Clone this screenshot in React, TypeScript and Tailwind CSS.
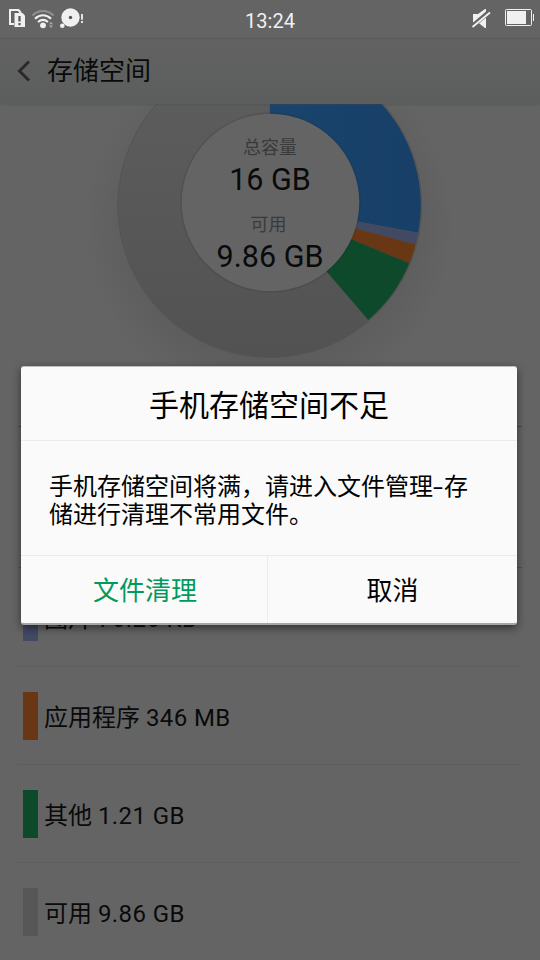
const sans = "font-['Roboto','Noto_Sans_CJK_SC',sans-serif]";

const CX = 269.8;
const CY = 101.5;
const R = 151;

const slices = [
    { from: -90, to: 10.4, color: "url(#blue)" },
    { from: 10.4, to: 15, color: "#414963" },
    { from: 15, to: 22.5, color: "#693714" },
    { from: 22.5, to: 49.3, color: "#0d492a" },
];

const slicePath = (from: number, to: number) => {
    const point = (deg: number) => {
        const rad = (deg * Math.PI) / 180;
        return `${CX + R * Math.cos(rad)} ${CY + R * Math.sin(rad)}`;
    };
    return `M${CX} ${CY}L${point(from)}A${R} ${R} 0 0 1 ${point(to)}Z`;
};

const rows = [
    { name: "图片", size: "76.26 KB", color: "bg-[#414963]" },
    { name: "应用程序", size: "346 MB", color: "bg-[#693714]" },
    { name: "其他", size: "1.21 GB", color: "bg-[#0d4a2b]" },
    { name: "可用", size: "9.86 GB", color: "bg-[#575757]" },
];

const StatusBar = () => (
    <div className="grid h-[38px] shrink-0 grid-cols-3 items-start text-[#f0f0f0]">
        <svg width="90" height="38" viewBox="0 0 90 38" fill="none">
            {/* SIM cards */}
            <path d="M14 24H10V10h8.500l2.500 3" stroke="currentColor" strokeWidth="2" />
            <path d="M14.500 13h8l2.500 2.500V27H14.500z" fill="currentColor" />
            <path d="M19.500 16v5.500M19.500 23v2.200" stroke="#555" strokeWidth="2.200" />
            {/* wifi */}
            <path d="M32.500 15.500c6-6 15-6 21 0" stroke="#929292" strokeWidth="2" />
            <path d="M35 18.700c5-4.500 11-4.500 16 0M38 22c3-2.500 7-2.500 10 0" stroke="currentColor" strokeWidth="2.200" />
            <circle cx="43" cy="25.300" r="2.900" fill="currentColor" />
            <path d="M49 24.300l2-2.500 2 2.500zM49 25.500l2 2.500 2-2.500z" fill="#aaa" />
            {/* disc */}
            <circle cx="70.500" cy="17.500" r="9.200" fill="currentColor" />
            <circle cx="70.500" cy="17.500" r="1.700" fill="#555" />
            <circle cx="62.300" cy="25.700" r="2.300" fill="currentColor" />
            <path d="M82 14v5.800M82 21v2" stroke="currentColor" strokeWidth="1.800" />
        </svg>
        <span className="pt-[9px] text-center text-[20px] leading-6">13:24</span>
        <svg className="justify-self-end" width="80" height="38" viewBox="0 0 80 38" fill="none">
            <path d="M13 14h5l7-5h1v19h-1l-7-5.500h-5z" fill="currentColor" />
            <path d="M12 26.500L29 12" stroke="#636363" strokeWidth="4.500" />
            <path d="M12.500 27L30 12.500" stroke="currentColor" strokeWidth="2" />
            <rect x="45.500" y="9.500" width="26" height="16" rx="1" stroke="currentColor" />
            <path d="M47 11h19v13H47z" fill="currentColor" />
            <path d="M73.500 14v7" stroke="currentColor" />
        </svg>
    </div>
);

const Header = () => (
    <header className="z-10 flex h-[66px] shrink-0 items-center border-t border-[#5a5a5a] bg-linear-to-b from-[#626262] to-[#5c5e5d] pb-px shadow-[0_1px_2px_#4a4a4a66]">
        <svg className="ml-4" width="15" height="22" viewBox="0 0 15 22" fill="none">
            <path d="M13 1.500L3.500 11l9.500 9.500" stroke="#2a2a2a" strokeWidth="3" />
        </svg>
        <h1 className="ml-4 text-[26px] leading-8 text-[#0a0a0a]">存储空间</h1>
    </header>
);

const StorageChart = () => (
    <div className="relative h-[322px] shrink-0">
        <svg width="540" height="322" viewBox="0 0 540 322">
            <defs>
                <linearGradient id="ring" x1="0" y1="0" x2="0" y2="1">
                    <stop offset="0" stopColor="#5e5e5e" />
                    <stop offset="1" stopColor="#525252" />
                </linearGradient>
                <linearGradient id="blue" x1="0" y1="0" x2="1" y2="0">
                    <stop offset="0" stopColor="#1a446c" />
                    <stop offset="1" stopColor="#173f68" />
                </linearGradient>
                <radialGradient id="halo">
                    <stop offset="0.700" stopColor="#5c5c5c" />
                    <stop offset="1" stopColor="#646464" />
                </radialGradient>
                <radialGradient id="hole">
                    <stop offset="0.960" stopColor="#000" stopOpacity="0.200" />
                    <stop offset="1" stopColor="#000" stopOpacity="0" />
                </radialGradient>
            </defs>
            <circle cx={CX} cy="120" r="185" fill="url(#halo)" />
            <circle cx={CX} cy={CY} r="152" fill="url(#ring)" stroke="#545454" />
            {slices.map((s) => (
                <path key={s.from} d={slicePath(s.from, s.to)} fill={s.color} />
            ))}
            <circle cx="270.500" cy="98.500" r="91" fill="url(#hole)" />
            <circle cx="270.500" cy="98.500" r="88.800" fill="#646464" />
        </svg>
        <div className="absolute inset-x-0 top-[31px] flex flex-col items-center text-[#0a0a0a]">
            <span className="text-[18px] leading-[26px] text-[#3a3a3a]">总容量</span>
            <span className="text-[30.5px] leading-[38px]">16 GB</span>
            <span className="mt-[13px] pr-[3px] text-[18px] leading-[26px] text-[#3a3a3a]">可用</span>
            <span className="text-[30.5px] leading-[38px]">9.86 GB</span>
        </div>
    </div>
);

const StorageList = () => (
    <div className="mx-[18px] border-t border-[#484848] pt-[140px]">
        <ul className="border-t border-[#505050]">
            {rows.map((row) => (
                <li key={row.name} className="flex h-[98px] items-center gap-[6px] border-b border-[#5e5e5e] pl-[5px] text-[24px] text-[#0a0a0a] first:h-[99px]">
                    <span className={`h-12 w-[15px] ${row.color}`} />
                    <span className="pt-1">
                        {row.name} <span className="tracking-[0.4px]">{row.size}</span>
                    </span>
                </li>
            ))}
        </ul>
    </div>
);

const LowStorageDialog = () => (
    <div role="dialog" className="absolute left-[21px] top-[366px] flex h-[259px] w-[496px] flex-col rounded-[3px] border-b-2 border-t border-b-[#a5a5a5] border-t-[#c0c0c0] bg-[#fafafa] text-black shadow-[0_3px_8px_rgba(0,0,0,0.5)]">
        <h2 className="flex h-[74px] items-center justify-center border-b border-[#ebebeb] pt-1 text-[30px]">手机存储空间不足</h2>
        <p className="flex-1 pl-7 pt-8 text-[24px] leading-7">
            手机存储空间将满，请进入文件管理<span className="inline-block w-[11px] origin-left scale-x-150">-</span>存
            <br />
            储进行清理不常用文件。
        </p>
        <div className="grid h-[68px] grid-cols-[247px_1fr] border-t border-[#ebebeb] text-[26px]">
            <button className="border-r border-[#ebebeb] pl-0.5 pt-1 text-[#00995e]">文件清理</button>
            <button className="pt-1">取消</button>
        </div>
    </div>
);

export default function App() {
    return (
        <div className={`relative flex h-[960px] w-[540px] flex-col overflow-hidden bg-[#646464] ${sans}`}>
            <StatusBar />
            <Header />
            <StorageChart />
            <StorageList />
            <LowStorageDialog />
        </div>
    );
}
